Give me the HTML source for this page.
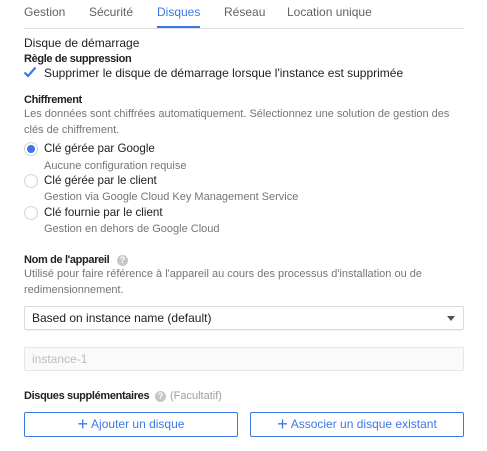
<!DOCTYPE html>
<html><head><meta charset="utf-8"><style>
*{margin:0;padding:0;box-sizing:border-box}
body{width:487px;height:451px;background:#fff;font-family:"Liberation Sans",sans-serif;position:relative;overflow:hidden;color:#212121}
.a{position:absolute;white-space:nowrap;line-height:16px}
.tab{font-size:12px;color:#5f6368;top:4px}
.h{font-size:11px;font-weight:bold;color:#212121;letter-spacing:-0.35px}
.t{font-size:12px;color:#212121}
.r{font-size:11.6px;color:#212121}
.g{font-size:11px;color:#757575}
.radio{position:absolute;left:24px;width:14px;height:14px;border-radius:50%;border:1px solid #d4d4d4;background:#fff}
.q{position:absolute;width:11px;height:11px;border-radius:50%;background:#c6c6c6;color:#fff;font-size:9px;font-weight:bold;text-align:center;line-height:11px}
.btn{position:absolute;top:412px;height:25px;border:1px solid #3b78e7;border-radius:2px;color:#3b78e7;font-size:12px;text-align:center;line-height:23px}
.btn b{font-size:18px;font-weight:normal;vertical-align:-2px;margin-right:3px}
</style></head><body>
<div class="a tab" style="left:24px">Gestion</div>
<div class="a tab" style="left:89px">Sécurité</div>
<div class="a tab" style="left:157px;color:#3b78e7">Disques</div>
<div class="a tab" style="left:224px">Réseau</div>
<div class="a tab" style="left:287px">Location unique</div>
<div style="position:absolute;left:24px;top:28px;width:440px;height:1px;background:#e0e0e0"></div>
<div style="position:absolute;left:157px;top:26px;width:43px;height:2px;background:#3b78e7"></div>

<div class="a t" style="left:24px;top:35px">Disque de démarrage</div>
<div class="a h" style="left:24px;top:51px">Règle de suppression</div>
<svg style="position:absolute;left:23px;top:66px" width="14" height="12" viewBox="0 0 14 12"><path d="M1.5 6.5 L5 10 L12.5 1.5" stroke="#3b78e7" stroke-width="2.2" fill="none"/></svg>
<div class="a t" style="left:44px;top:65px">Supprimer le disque de démarrage lorsque l'instance est supprimée</div>

<div class="a h" style="left:24px;top:92px">Chiffrement</div>
<div class="a g" style="left:24px;top:106px">Les données sont chiffrées automatiquement. Sélectionnez une solution de gestion des</div>
<div class="a g" style="left:24px;top:122px">clés de chiffrement.</div>

<div class="radio" style="top:142px"><div style="position:absolute;left:2px;top:2px;width:8px;height:8px;border-radius:50%;background:#3b78e7"></div></div>
<div class="a r" style="left:44px;top:141px">Clé gérée par Google</div>
<div class="a g" style="left:44px;top:158px">Aucune configuration requise</div>
<div class="radio" style="top:174px"></div>
<div class="a r" style="left:44px;top:173px">Clé gérée par le client</div>
<div class="a g" style="left:44px;top:189px">Gestion via Google Cloud Key Management Service</div>
<div class="radio" style="top:206px"></div>
<div class="a r" style="left:44px;top:205px">Clé fournie par le client</div>
<div class="a g" style="left:44px;top:221px">Gestion en dehors de Google Cloud</div>

<div class="a h" style="left:24px;top:252px">Nom de l'appareil</div>
<div class="q" style="left:117px;top:255px">?</div>
<div class="a g" style="left:24px;top:266px">Utilisé pour faire référence à l'appareil au cours des processus d'installation ou de</div>
<div class="a g" style="left:24px;top:282px">redimensionnement.</div>

<div style="position:absolute;left:24px;top:306px;width:440px;height:24px;border:1px solid #dadada;border-radius:2px;box-shadow:0 1px 1px rgba(0,0,0,.06)"></div>
<div class="a t" style="left:32px;top:310px">Based on instance name (default)</div>
<div style="position:absolute;left:447px;top:316px;width:0;height:0;border-left:4.5px solid transparent;border-right:4.5px solid transparent;border-top:5px solid #555"></div>

<div style="position:absolute;left:24px;top:347px;width:440px;height:24px;border:1px solid #e6e6e6;background:#fafafa;border-radius:2px"></div>
<div class="a" style="left:32px;top:351px;font-size:12px;color:#bdbdbd">instance-1</div>

<div class="a h" style="left:24px;top:388px">Disques supplémentaires</div>
<div class="q" style="left:155px;top:391px">?</div>
<div class="a g" style="left:170px;top:388px;color:#9e9e9e">(Facultatif)</div>

<div class="btn" style="left:24px;width:214px"><b>+</b>Ajouter un disque</div>
<div class="btn" style="left:250px;width:214px"><b>+</b>Associer un disque existant</div>
</body></html>
